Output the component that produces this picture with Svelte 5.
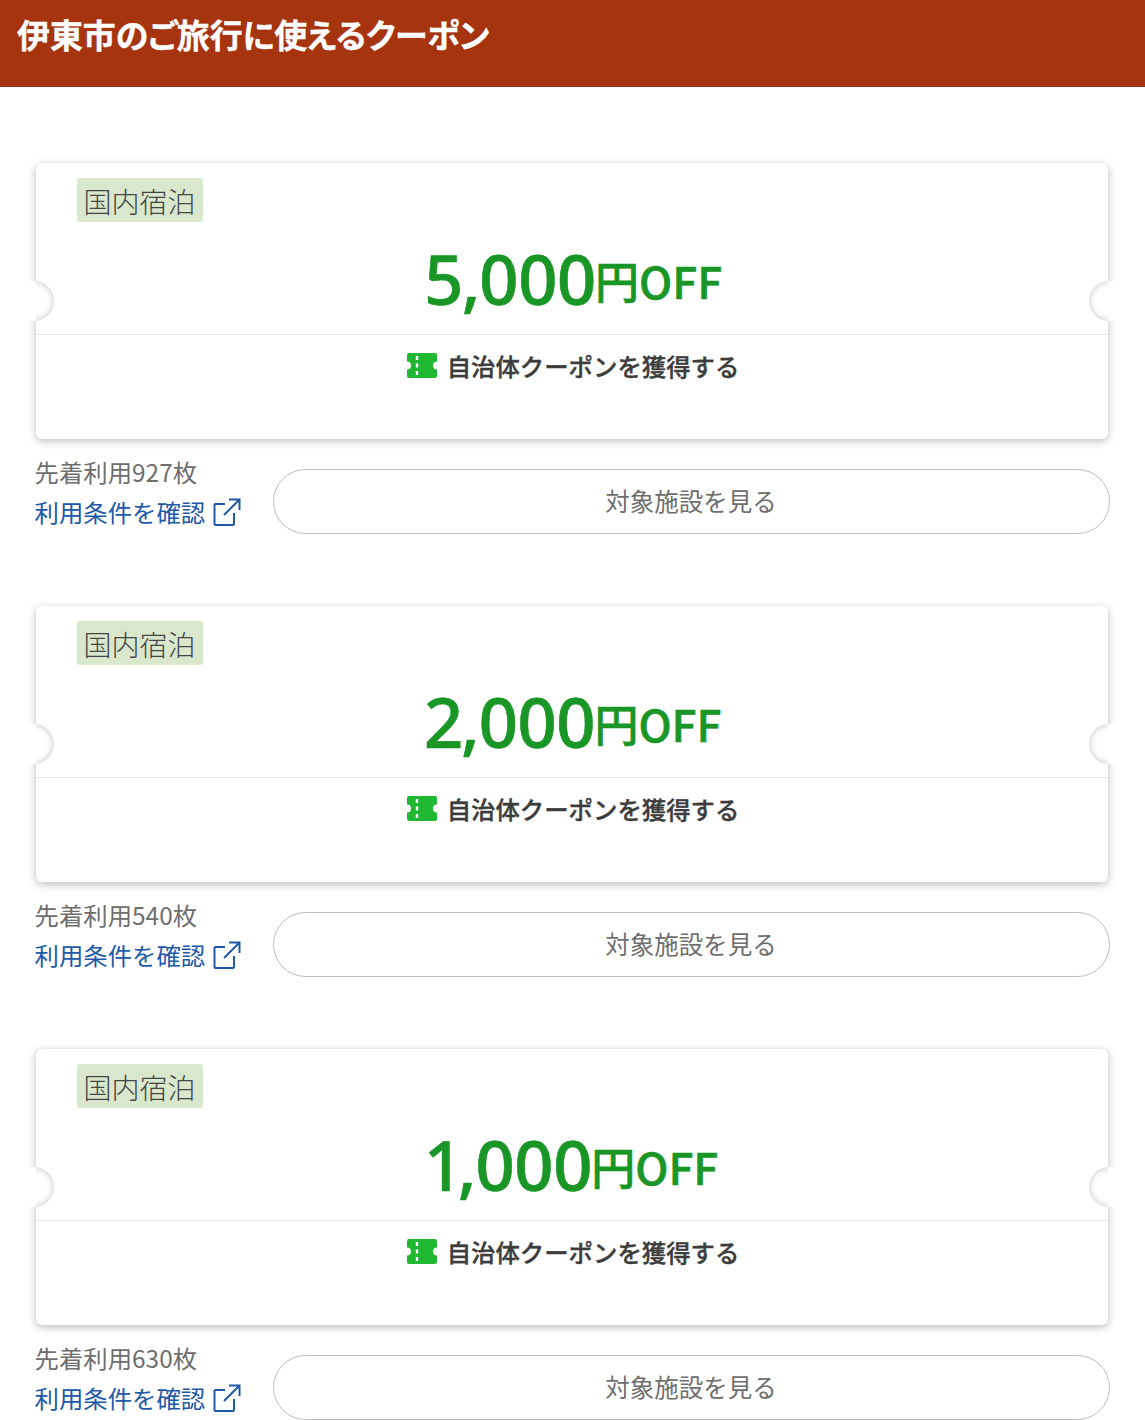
<script>
  const coupons = [
    { amount: '5,000', remain: 927 },
    { amount: '2,000', remain: 540 },
    { amount: '1,000', remain: 630 }
  ];
</script>

<header class="title"><h1>伊東市のご旅行に使えるクーポン</h1></header>

<main class="list">
  {#each coupons as c}
    <section class="coupon">
      <div class="card">
        <span class="notch left"></span>
        <span class="notch right"></span>
        <div class="top">
          <span class="tag">国内宿泊</span>
          <p class="price"><span class="num">{c.amount}</span><span class="unit">円OFF</span></p>
        </div>
        <div class="cta">
          <svg class="ticket" width="30" height="25" viewBox="0 0 30 25">
            <path fill="#20b832" d="M2 0H28a2 2 0 0 1 2 2V8.500a4 4 0 0 0 0 8V23a2 2 0 0 1-2 2H2a2 2 0 0 1-2-2V16.500a4 4 0 0 0 0-8V2A2 2 0 0 1 2 0Z"/>
            <path stroke="#fff" stroke-width="2.400" d="M10 3v4M10 10.500v4M10 18v4"/>
          </svg>
          <span>自治体クーポンを獲得する</span>
        </div>
      </div>
      <div class="foot">
        <div class="info">
          <p class="remain">先着利用{c.remain}枚</p>
          <a class="terms" href="#terms">利用条件を確認
            <svg width="28" height="28" viewBox="0 0 28 28" fill="none" stroke="#2158a8" stroke-width="2">
              <path d="M12 6H2.500a1 1 0 0 0-1 1V26a1 1 0 0 0 1 1H20a1 1 0 0 0 1-1V15"/>
              <path d="M11 17 26 2M16 1.500H26.500V12"/>
            </svg>
          </a>
        </div>
        <button class="see">対象施設を見る</button>
      </div>
    </section>
  {/each}
</main>

<style>
  :global(body) {
    margin: 0;
    background: #fff;
    font-family: "Noto Sans CJK JP", "Noto Sans", sans-serif;
  }
  .title {
    height: 87px;
    background: #a5340f;
    box-sizing: border-box;
    padding: 15px 17px 0;
  }
  h1 {
    margin: 0;
    color: #fff;
    font-size: 32.900px;
    line-height: 38px;
    font-weight: 700;
    font-feature-settings: "palt";
    -webkit-text-stroke: 0.4px #fff;
  }
  .list {
    padding: 76px 37px 0 36px;
    display: flex;
    flex-direction: column;
    gap: 72px;
  }
  .card {
    position: relative;
    height: 276px;
    background: #fff;
    border-radius: 6px;
    box-shadow: 0 2px 8px rgba(0, 0, 0, 0.28);
  }
  .notch {
    position: absolute;
    top: 118px;
    width: 40px;
    height: 40px;
    border-radius: 50%;
    background: #fff;
    z-index: 1;
  }
  .notch::after {
    content: "";
    position: absolute;
    inset: 0;
    border-radius: 50%;
    box-shadow: inset 0 0 7px rgba(0, 0, 0, 0.24);
  }
  .notch.left { left: -22px; }
  .notch.left::after { clip-path: inset(0 0 0 22px); }
  .notch.right { right: -21px; }
  .notch.right::after { clip-path: inset(0 21px 0 0); }
  .top {
    height: 172px;
    box-sizing: border-box;
    padding: 15px 0 0 41px;
    border-bottom: 1px solid #e8e8e8;
    position: relative;
  }
  .tag {
    display: block;
    width: fit-content;
    height: 44px;
    padding: 0 7.500px 0 6.500px;
    box-sizing: border-box;
    background: #d9e8cd;
    border-radius: 3px;
    color: #444;
    font-size: 28px;
    line-height: 46px;
    font-weight: 300;
  }
  .price {
    margin: 0;
    position: absolute;
    left: 2px;
    right: 0;
    top: 70px;
    text-align: center;
    color: #1a9626;
    white-space: nowrap;
    line-height: 90px;
    font-family: "Noto Sans", sans-serif;
    font-weight: 500;
    -webkit-text-stroke: 0.6px #1a9626;
  }
  .num {
    font-size: 69px;
    letter-spacing: -1.900px;
    font-feature-settings: "pnum";
  }
  .unit {
    font-size: 44px;
    font-family: "Noto Sans CJK JP Medium", "Noto Sans CJK JP", sans-serif;
    font-weight: 500;
    position: relative;
    top: -6px;
    -webkit-text-stroke: 0.6px #1a9626;
  }
  .cta {
    display: flex;
    justify-content: center;
    align-items: center;
    gap: 10px;
    height: 60px;
    padding-left: 2px;
    color: #3c3c3c;
    font-size: 24.400px;
    font-family: "Noto Sans CJK JP Medium", "Noto Sans CJK JP", sans-serif;
    font-weight: 500;
    -webkit-text-stroke: 0.35px #3c3c3c;
  }
  .ticket { width: 30px; height: 25px; flex: none; }
  .foot {
    display: flex;
    align-items: flex-start;
    padding-top: 12px;
    margin-left: -1.500px;
    margin-right: -2px;
  }
  .info { width: 238.500px; flex: none; }
  .remain {
    margin: 0;
    color: #6e6e6e;
    font-size: 24.400px;
    line-height: 41px;
    white-space: nowrap;
  }
  .terms {
    display: flex;
    align-items: center;
    gap: 7.500px;
    color: #2158a8;
    font-size: 24.400px;
    line-height: 40px;
    text-decoration: none;
    white-space: nowrap;
  }
  .see {
    flex: 1;
    height: 65px;
    margin-top: 18px;
    background: #fff;
    border: 1px solid #bdbdbd;
    border-radius: 33px;
    color: #6e6e6e;
    font: inherit;
    font-size: 24.500px;
    padding: 0 1px 3px 0;
  }
</style>
